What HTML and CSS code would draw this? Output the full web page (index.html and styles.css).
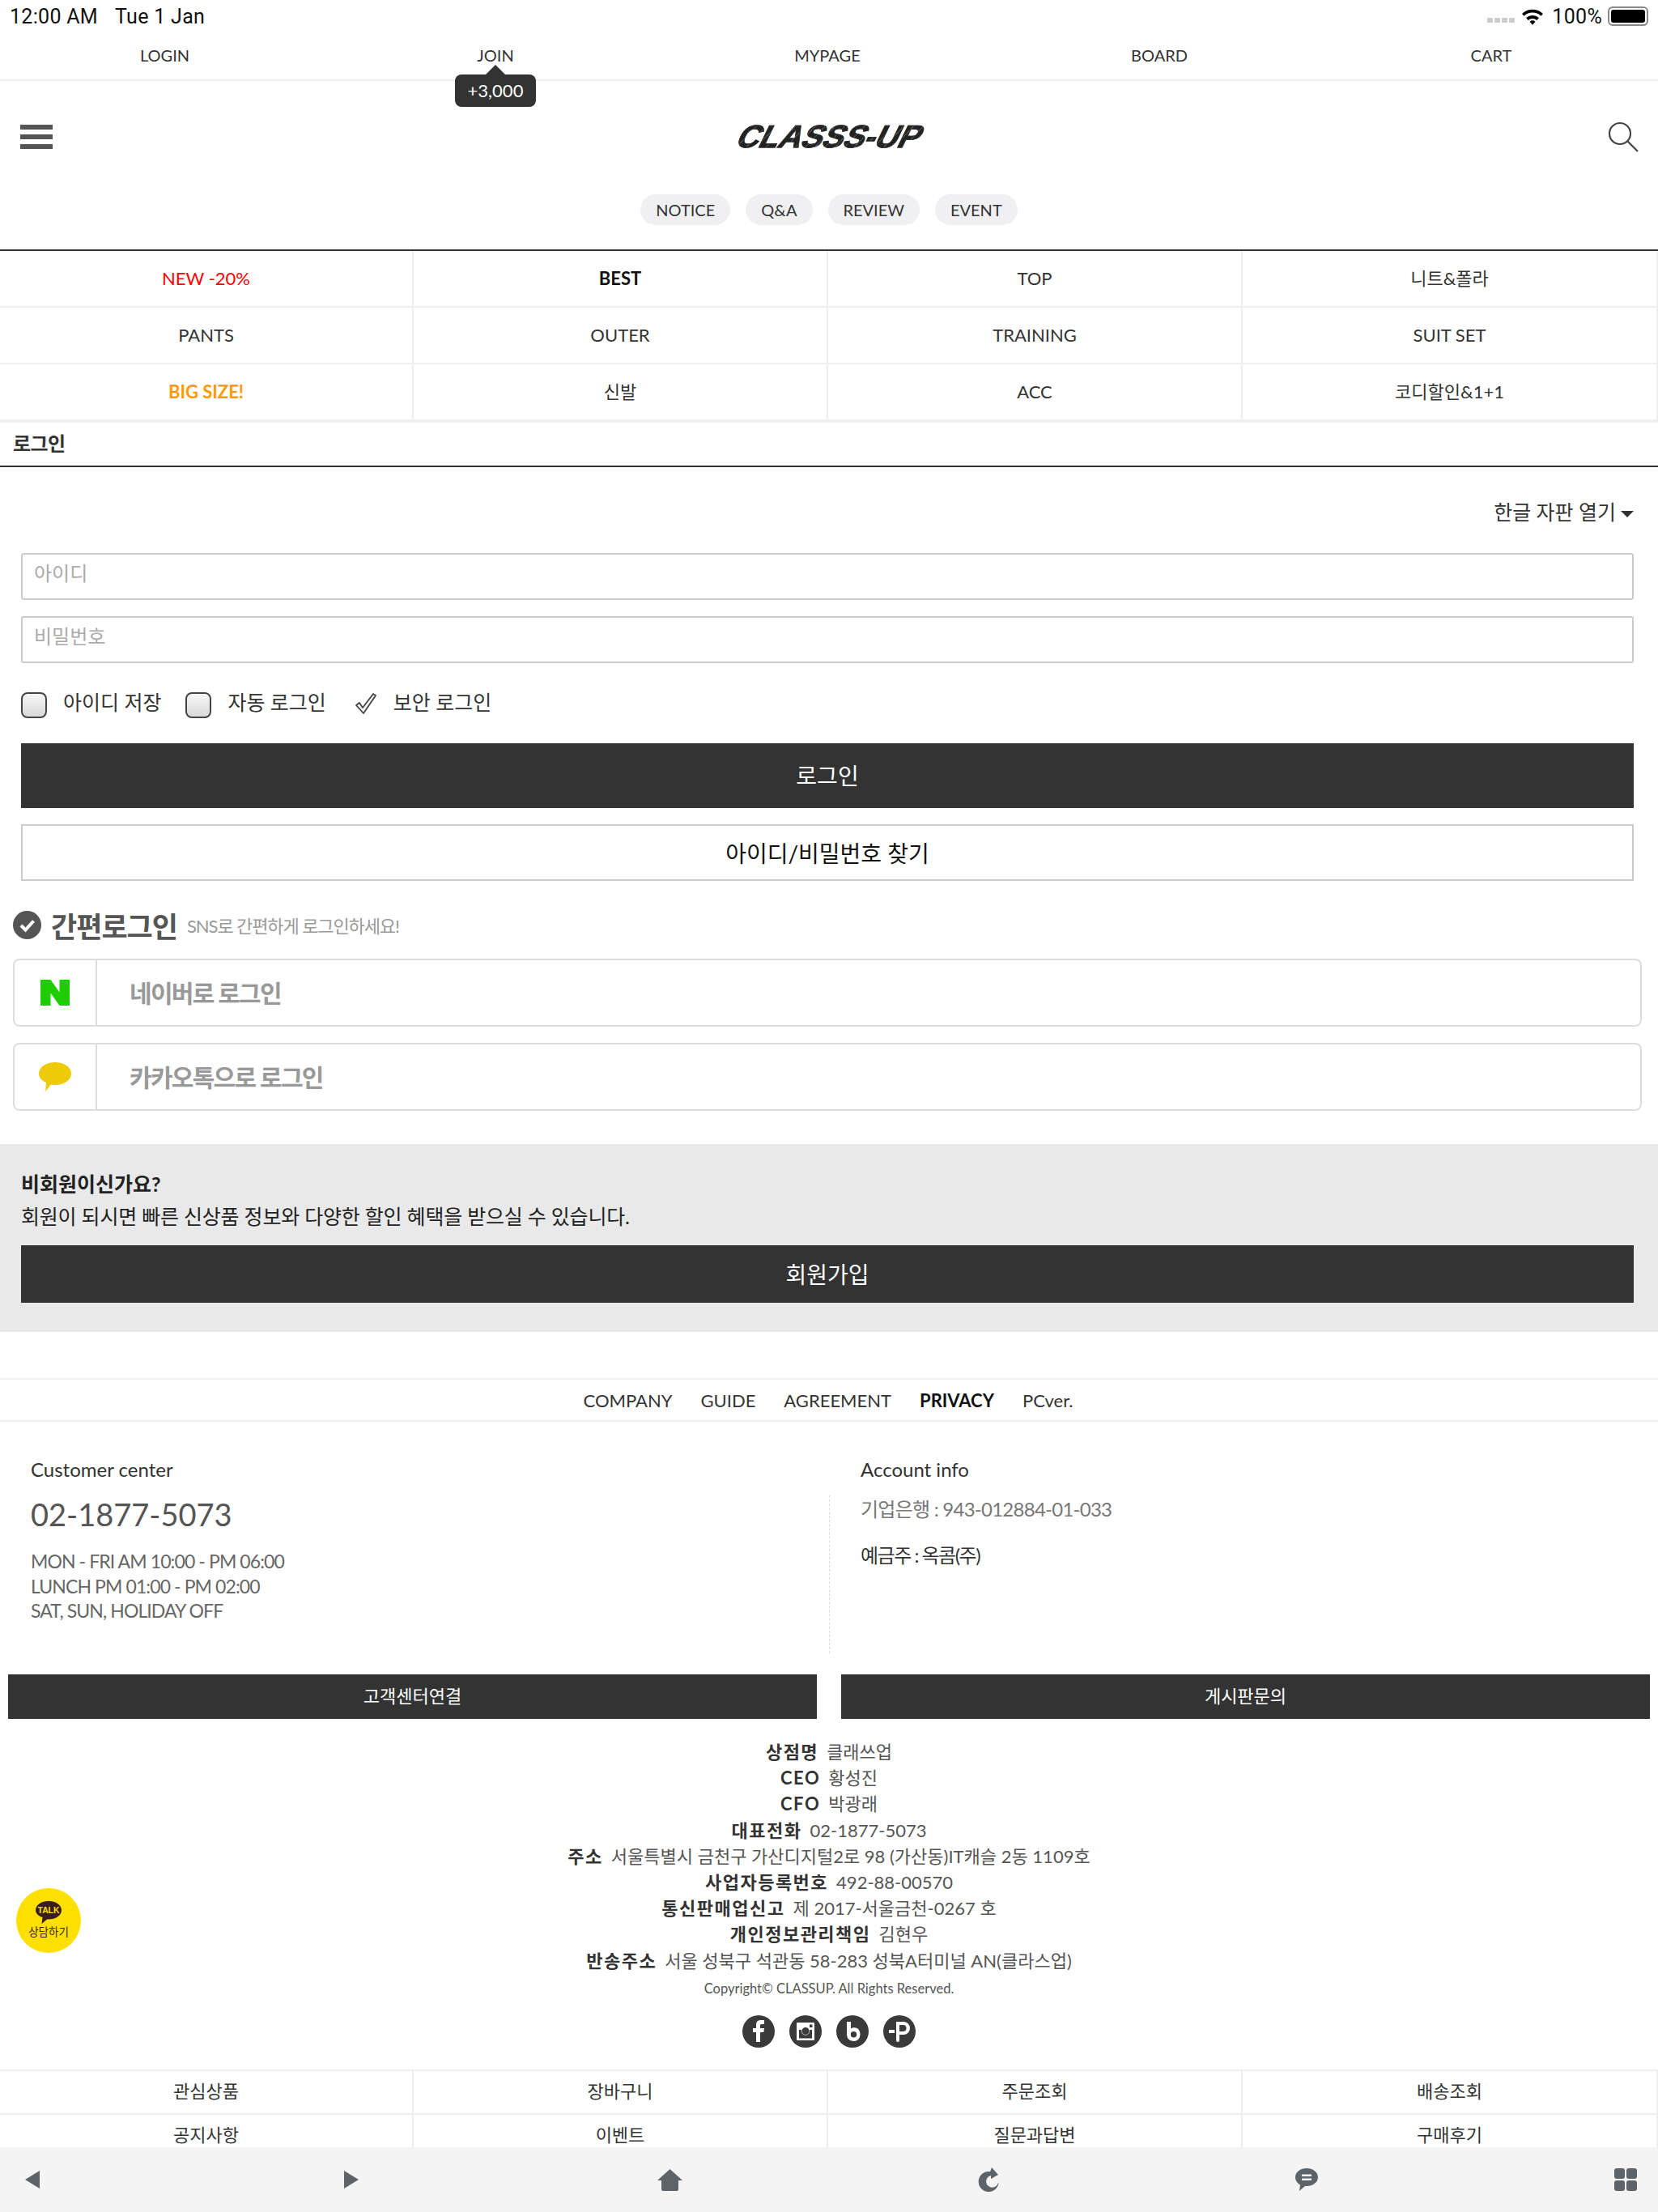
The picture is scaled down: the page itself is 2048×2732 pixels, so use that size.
FILE: index.html
```html
<!DOCTYPE html>
<html lang="ko">
<head>
  <meta charset="UTF-8">
  <title>CLASSS-UP</title>
  <link rel="stylesheet" href="styles.css">
</head>
<body>
  <div class="status-bar">
    <span class="status-time">12:00 AM</span>
    <span class="status-date">Tue 1 Jan</span>
    <span class="status-right">
      <span class="signal"><i></i><i></i><i></i><i></i></span>
      <svg class="wifi" width="28" height="22" viewBox="0 0 28 22"><path d="M1 8a19 19 0 0 1 26 0l-2.600 2.800a15 15 0 0 0-20.800 0zM6 13a12 12 0 0 1 16 0l-2.700 2.900a8 8 0 0 0-10.600 0zM10.500 17.800a5 5 0 0 1 7 0L14 21.800z" fill="#000"/></svg>
      <span class="status-pct">100%</span>
      <span class="battery"><b></b></span>
    </span>
  </div>

  <nav class="top-nav">
    <a>LOGIN</a>
    <a class="join">JOIN<span class="join-tip">+3,000</span></a>
    <a>MYPAGE</a>
    <a>BOARD</a>
    <a>CART</a>
  </nav>

  <header class="site-head">
    <div class="logo-row">
      <span class="burger"><i></i><i></i><i></i></span>
      <span class="logo">CLASSS-UP</span>
      <svg class="search" width="38" height="38" viewBox="0 0 38 38" fill="none" stroke="#444" stroke-width="2.200"><circle cx="15" cy="15" r="13"/><path d="M24.500 24.500L37 37"/></svg>
    </div>
    <div class="pills">
      <a>NOTICE</a>
      <a>Q&amp;A</a>
      <a>REVIEW</a>
      <a>EVENT</a>
    </div>
  </header>

  <div class="cat-grid">
    <a class="red">NEW -20%</a>
    <a class="bold">BEST</a>
    <a>TOP</a>
    <a>니트&amp;폴라</a>
    <a>PANTS</a>
    <a>OUTER</a>
    <a>TRAINING</a>
    <a>SUIT SET</a>
    <a class="orange">BIG SIZE!</a>
    <a>신발</a>
    <a>ACC</a>
    <a>코디할인&amp;1+1</a>
  </div>

  <h2 class="page-title">로그인</h2>

  <section class="login-box">
    <div class="keypad-toggle">한글 자판 열기<span class="caret"></span></div>
    <div class="field">아이디</div>
    <div class="field">비밀번호</div>
    <div class="checks">
      <span class="cb"></span><label class="cb-label">아이디 저장</label>
      <span class="cb"></span><label class="cb-label">자동 로그인</label>
      <svg class="tick" width="28" height="28" viewBox="0 0 28 28"><path d="M2 16l4-3 4 6L23 2l3 2-15 22z" fill="#f4f4f4" stroke="#444" stroke-width="1.800" stroke-linejoin="round"/></svg>
      <label class="cb-label">보안 로그인</label>
    </div>
    <a class="btn-dark btn-login">로그인</a>
    <a class="btn-line">아이디/비밀번호 찾기</a>
  </section>

  <section class="sns">
    <div class="sns-title">
      <svg width="35" height="35" viewBox="0 0 35 35"><circle cx="17.500" cy="17.500" r="17.500" fill="#555"/><path d="M10 18l5.500 5.500L25.500 12.500" fill="none" stroke="#fff" stroke-width="4"/></svg>
      <strong>간편로그인</strong>
      <span>SNS로 간편하게 로그인하세요!</span>
    </div>
    <div class="sns-row">
      <span class="sns-icon"><svg width="36" height="32" viewBox="0 0 36 32"><path d="M0 0h12.500l11 15.500V0H36v32H23.500l-11-15.500V32H0z" fill="#1ecd00"/></svg></span>
      <span class="sns-text">네이버로 로그인</span>
    </div>
    <div class="sns-row">
      <span class="sns-icon"><svg width="40" height="36" viewBox="0 0 40 36"><path d="M20 0c11 0 20 6 20 14s-9 14-20 14c-2 0-3 0-5-.500L8 36l1-11C4 23 0 19 0 14 0 6 9 0 20 0z" fill="#eecb08"/></svg></span>
      <span class="sns-text">카카오톡으로 로그인</span>
    </div>
  </section>

  <section class="guest">
    <strong>비회원이신가요?</strong>
    <p>회원이 되시면 빠른 신상품 정보와 다양한 할인 혜택을 받으실 수 있습니다.</p>
    <a class="btn-dark btn-join">회원가입</a>
  </section>

  <nav class="foot-nav">
    <a>COMPANY</a>
    <a>GUIDE</a>
    <a>AGREEMENT</a>
    <a class="bold">PRIVACY</a>
    <a>PCver.</a>
  </nav>

  <div class="info-cols">
    <div class="info-col">
      <h3>Customer center</h3>
      <div class="phone">02-1877-5073</div>
      <p class="hours">MON - FRI AM 10:00 - PM 06:00<br>LUNCH PM 01:00 - PM 02:00<br>SAT, SUN, HOLIDAY OFF</p>
    </div>
    <div class="info-col info-account">
      <h3>Account info</h3>
      <p class="bank">기업은행 : 943-012884-01-033</p>
      <p class="owner">예금주 : 옥콤(주)</p>
    </div>
  </div>

  <div class="foot-btns">
    <a>고객센터연결</a>
    <a>게시판문의</a>
  </div>

  <div class="company">
    <p><b>상점명</b>클래쓰업</p>
    <p><b>CEO</b>황성진</p>
    <p><b>CFO</b>박광래</p>
    <p><b>대표전화</b>02-1877-5073</p>
    <p><b>주소</b>서울특별시 금천구 가산디지털2로 98 (가산동)IT캐슬 2동 1109호</p>
    <p><b>사업자등록번호</b>492-88-00570</p>
    <p><b>통신판매업신고</b>제 2017-서울금천-0267 호</p>
    <p><b>개인정보관리책임</b>김현우</p>
    <p><b>반송주소</b>서울 성북구 석관동 58-283 성북A터미널 AN(클라스업)</p>
    <p class="copy">Copyright© CLASSUP. All Rights Reserved.</p>
  </div>

  <div class="social">
    <svg width="40" height="40" viewBox="0 0 40 40"><circle cx="20" cy="20" r="20" fill="#3a3a3a"/><path d="M17 33V21h-4v-5h4v-4c0-4 2-6 6-6h4v5h-3c-1.500 0-2 .600-2 2v3h5l-.700 5H22v12z" fill="#fff"/></svg>
    <svg width="40" height="40" viewBox="0 0 40 40"><circle cx="20" cy="20" r="20" fill="#3a3a3a"/><path fill-rule="evenodd" d="M10 9h20a1 1 0 0 1 1 1v20a1 1 0 0 1-1 1H10a1 1 0 0 1-1-1V10a1 1 0 0 1 1-1zm2 9v10.500h16V18h-3a5.200 5.200 0 1 1-10 0zm8-3a4.500 4.500 0 1 0 0 9 4.500 4.500 0 0 0 0-9zm5-3.500v3.500h3.500v-3.500z" fill="#fff"/></svg>
    <svg width="40" height="40" viewBox="0 0 40 40"><circle cx="20" cy="20" r="20" fill="#3a3a3a"/><path fill-rule="evenodd" d="M13 8h5v8.500c1.200-.800 2.600-1.200 4-1.200 4.500 0 7.500 3.500 7.500 8.200S26.500 32 22 32c-4.800 0-9-2.800-9-8.500zm8.500 12a3.700 3.700 0 1 0 0 7.400 3.700 3.700 0 0 0 0-7.400z" fill="#fff"/></svg>
    <svg width="40" height="40" viewBox="0 0 40 40"><circle cx="20" cy="20" r="20" fill="#3a3a3a"/><path fill-rule="evenodd" d="M16 8h9a8 8 0 0 1 0 16h-5v7a2 2 0 0 1-4 0zm4 4v8h4.500a4 4 0 0 0 0-8zM7 18h7v4H7z" fill="#fff"/></svg>
  </div>

  <div class="quick-grid">
    <a>관심상품</a>
    <a>장바구니</a>
    <a>주문조회</a>
    <a>배송조회</a>
    <a>공지사항</a>
    <a>이벤트</a>
    <a>질문과답변</a>
    <a>구매후기</a>
  </div>

  <a class="talk-badge">
    <svg width="32" height="30" viewBox="0 0 34 30"><path d="M17 0c9.400 0 17 5 17 12s-7.600 12-17 12h-2l-7 6 1-8.500C3.500 19.500 0 16 0 12 0 5 7.600 0 17 0z" fill="#3a1d1d"/><text x="17" y="16.500" text-anchor="middle" class="talk-word">TALK</text></svg>
    <span>상담하기</span>
  </a>

  <div class="tool-bar">
    <span><svg width="18" height="22" viewBox="0 0 18 22"><path d="M18 0v22L0 11z" fill="#5d6469"/></svg></span>
    <span><svg width="18" height="22" viewBox="0 0 18 22"><path d="M0 0v22l18-11z" fill="#5d6469"/></svg></span>
    <span><svg width="31" height="27" viewBox="0 0 31 27"><path d="M15.500 0L31 14h-5v11a2 2 0 0 1-2 2H7a2 2 0 0 1-2-2V14H0z" fill="#5d6469"/></svg></span>
    <span><svg width="26" height="30" viewBox="0 0 26 30"><path d="M17 0l8 9-9 5v-4a7.500 7.500 0 1 0 9 9h-.500l1 .500A12.500 12.500 0 1 1 15 5.200z" fill="#5d6469"/></svg></span>
    <span><svg width="28" height="28" viewBox="0 0 28 28"><path fill-rule="evenodd" d="M14 0c7.700 0 14 4.700 14 11s-6.300 11-14 11h-2l-7 6 1-7.500C2.500 18.500 0 15 0 11 0 4.700 6.300 0 14 0zM8 7.500v2.500h12V7.500zM8 12.500V15h12v-2.500z" fill="#5d6469"/></svg></span>
    <span><svg width="28" height="28" viewBox="0 0 28 28" fill="#5d6469"><rect width="13" height="13" rx="3"/><rect x="15" width="13" height="13" rx="3"/><rect y="15" width="13" height="13" rx="3"/><rect x="15" y="15" width="13" height="13" rx="3"/></svg></span>
  </div>
</body>
</html>
```

FILE: styles.css
```css
* {
  box-sizing: border-box;
}
html, body {
  margin: 0;
  height: 2732px;
  overflow: hidden;
}
body {
  position: relative;
  background: #fff;
  font-family: Lato, "Noto Sans CJK KR", sans-serif;
  color: #333;
  font-size: 22px;
}
p, h2, h3 {
  margin: 0;
}
i {
  display: block;
}

/* status bar */
.status-bar {
  height: 40px;
  padding: 0 12px;
  display: flex;
  align-items: center;
  font-family: Roboto, sans-serif;
  font-size: 25px;
  letter-spacing: .3px;
  color: #111;
}
.status-date {
  margin-left: 21px;
}
.status-right {
  margin-left: auto;
  display: flex;
  align-items: center;
}
.signal {
  display: flex;
  gap: 2px;
  margin: 10px 8px 0 0;
}
.signal i {
  width: 7px;
  height: 6px;
  background: #ccc;
  border-radius: 1px;
}
.status-pct {
  margin: 0 7px 0 10px;
}
.battery {
  width: 50px;
  height: 24px;
  border: 2px solid #888;
  border-radius: 6px;
  padding: 2px;
}
.battery b {
  display: block;
  height: 100%;
  background: #000;
  border-radius: 3px;
}

/* top nav */
.top-nav {
  height: 60px;
  display: grid;
  grid-template-columns: 407px repeat(4, 410px);
  padding-right: 1px;
  border-bottom: 2px solid #eee;
  text-align: center;
  font-size: 20px;
  line-height: 56px;
}
.join {
  position: relative;
}
.join-tip {
  position: absolute;
  left: 155px;
  top: 52px;
  width: 100px;
  height: 40px;
  background: #333;
  color: #fff;
  border-radius: 8px;
  font-size: 22px;
  line-height: 40px;
  z-index: 2;
}
.join-tip::before {
  content: "";
  position: absolute;
  left: 38px;
  top: -12px;
  border: 12px solid transparent;
  border-top: 0;
  border-bottom-color: #333;
}

/* header */
.site-head {
  height: 210px;
  padding-top: 26px;
  border-bottom: 2px solid #333;
}
.logo-row {
  height: 86px;
  padding: 0 24px 0 25px;
  display: flex;
  align-items: center;
  justify-content: space-between;
}
.burger {
  display: flex;
  flex-direction: column;
  gap: 6px;
  width: 40px;
}
.burger i {
  height: 6px;
  background: #555;
}
.logo {
  font-family: "Liberation Sans", sans-serif;
  font-weight: 700;
  font-size: 39px;
  line-height: 40px;
  background: repeating-linear-gradient(115deg, #222 0 5px, #666 5px 6px, #222 6px 11px);
  -webkit-background-clip: text;
  background-clip: text;
  color: transparent;
  -webkit-text-stroke: .8px #2a2a2a;
  transform: skewX(-26deg);
}
.pills {
  margin-top: 28px;
  display: flex;
  justify-content: center;
  gap: 19px;
}
.pills a {
  height: 38px;
  padding: 0 19px;
  background: #f0f0f2;
  border-radius: 19px;
  font-size: 20px;
  line-height: 38px;
}

/* category menu */
.cat-grid, .quick-grid {
  display: grid;
  grid-template-columns: 511px 512px 512px 1fr;
  text-align: center;
}
.cat-grid a {
  height: 70px;
  line-height: 68px;
  border-right: 2px solid #eee;
  border-bottom: 2px solid #eee;
}
.cat-grid a:nth-child(n+9) {
  height: 72px;
  border-bottom-width: 4px;
}
.red {
  color: #f00;
}
.orange {
  color: #f90;
  font-weight: 700;
}
.bold {
  font-weight: 700;
  color: #111;
}
.page-title {
  height: 55px;
  padding-left: 16px;
  border-bottom: 2px solid #333;
  font-size: 24px;
  line-height: 52px;
  letter-spacing: -.6px;
}

/* login */
.login-box {
  padding: 0 30px 0 26px;
}
.keypad-toggle {
  height: 106px;
  padding-top: 39px;
  text-align: right;
  font-size: 25px;
  line-height: 32px;
}
.caret {
  display: inline-block;
  margin-left: 6px;
  vertical-align: 3px;
  border: 8px solid transparent;
  border-bottom: 0;
  border-top-color: #333;
}
.field {
  height: 58px;
  margin-bottom: 20px;
  padding: 5px 14px;
  border: 2px solid #ccc;
  border-radius: 3px;
  color: #aaa;
  font-size: 24px;
  line-height: 36px;
}
.checks {
  height: 79px;
  padding-top: 16px;
  display: flex;
  align-items: flex-start;
  font-size: 25px;
}
.cb {
  width: 32px;
  height: 32px;
  border: 2px solid #444;
  border-radius: 8px;
  background: linear-gradient(#f6f6f6, #d9d9d9);
}
.cb-label {
  margin: -6px 30px 0 20px;
  line-height: 36px;
}
.tick {
  margin: 0 0 0 5px;
}
.btn-dark {
  display: block;
  background: #333;
  color: #fff;
  text-align: center;
  font-size: 28px;
}
.btn-login {
  height: 80px;
  line-height: 80px;
}
.btn-line {
  display: block;
  height: 70px;
  margin-top: 20px;
  border: 2px solid #ccc;
  color: #111;
  text-align: center;
  font-size: 28px;
  line-height: 68px;
}

/* sns login */
.sns {
  padding: 0 20px 0 16px;
}
.sns-title {
  height: 96px;
  padding-top: 12px;
  display: flex;
  align-items: center;
  gap: 12px;
}
.sns-title strong {
  color: #555;
  font-size: 35px;
  letter-spacing: -1px;
}
.sns-title span {
  color: #999;
  font-size: 22px;
  letter-spacing: -1.100px;
}
.sns-row {
  height: 84px;
  margin-bottom: 20px;
  display: flex;
  align-items: center;
  border: 2px solid #ddd;
  border-radius: 8px;
}
.sns-icon {
  width: 102px;
  height: 100%;
  display: flex;
  align-items: center;
  justify-content: center;
  border-right: 2px solid #ddd;
}
.sns-text {
  margin: 0 0 2px 40px;
  color: #999;
  font-size: 30px;
  font-weight: 700;
  letter-spacing: -1.700px;
}

/* guest box */
.guest {
  height: 232px;
  margin-top: 41px;
  padding: 29px 30px 0 26px;
  background: #e9e9e9;
  font-size: 25px;
  line-height: 40px;
  color: #222;
}
.guest p {
  letter-spacing: -.2px;
}
.btn-join {
  height: 71px;
  margin-top: 16px;
  line-height: 72px;
}

/* footer */
.foot-nav {
  height: 54px;
  margin-top: 57px;
  padding-right: 2px;
  display: flex;
  justify-content: center;
  gap: 35px;
  border-top: 2px solid #eee;
  border-bottom: 2px solid #eee;
  line-height: 52px;
}
.info-cols {
  height: 312px;
  display: flex;
  padding-top: 41px;
}
.info-col {
  width: 1024px;
  padding-left: 38px;
}
.info-col h3 {
  font-size: 24px;
  font-weight: 400;
  line-height: 36px;
}
.phone {
  margin-top: 5px;
  font-size: 38px;
  line-height: 64px;
  color: #555;
}
.hours {
  margin-top: 11px;
  font-size: 23px;
  line-height: 30.500px;
  letter-spacing: -.9px;
  color: #666;
}
.info-account {
  position: relative;
  padding-left: 39px;
}
.info-account::before {
  content: "";
  position: absolute;
  left: 0;
  top: 50px;
  height: 195px;
  border-left: 1px dashed #ddd;
}
.bank {
  margin-top: 15px;
  font-size: 24px;
  line-height: 32px;
  letter-spacing: -.75px;
  color: #777;
}
.owner {
  margin-top: 24px;
  font-size: 24px;
  line-height: 34px;
  letter-spacing: -1.500px;
  color: #333;
}
.foot-btns {
  display: flex;
  gap: 30px;
  padding: 0 10px;
}
.foot-btns a {
  flex: 1;
  height: 55px;
  background: #333;
  color: #fff;
  text-align: center;
  line-height: 54px;
}
.company {
  margin-top: 25px;
  text-align: center;
  font-size: 22px;
  line-height: 32.200px;
  color: #555;
}
.company b {
  margin-right: 10px;
  color: #333;
  letter-spacing: 1.500px;
}
.company .copy {
  font-size: 16.500px;
  line-height: 36px;
}
.social {
  margin-top: 15px;
  display: flex;
  justify-content: center;
  gap: 18px;
}
.quick-grid {
  margin-top: 27px;
  border-top: 2px solid #eee;
}
.quick-grid a {
  height: 54px;
  line-height: 50px;
  border-right: 2px solid #eee;
  border-bottom: 2px solid #eee;
}
.talk-badge {
  position: absolute;
  left: 20px;
  top: 2332px;
  width: 80px;
  height: 80px;
  padding-top: 15px;
  border-radius: 50%;
  background: #ffe000;
  color: #3a1d1d;
  display: flex;
  flex-direction: column;
  align-items: center;
  font-size: 13.500px;
  line-height: 18px;
}
.talk-word {
  font-family: "Liberation Sans", sans-serif;
  font-size: 11px;
  font-weight: 700;
  fill: #ffe000;
}
.tool-bar {
  position: absolute;
  left: 0;
  right: 0;
  bottom: 0;
  height: 80px;
  padding: 0 24px;
  display: flex;
  align-items: center;
  justify-content: space-between;
  background: #f4f4f4;
}
.tool-bar span {
  width: 32px;
  display: flex;
  justify-content: center;
}
```
